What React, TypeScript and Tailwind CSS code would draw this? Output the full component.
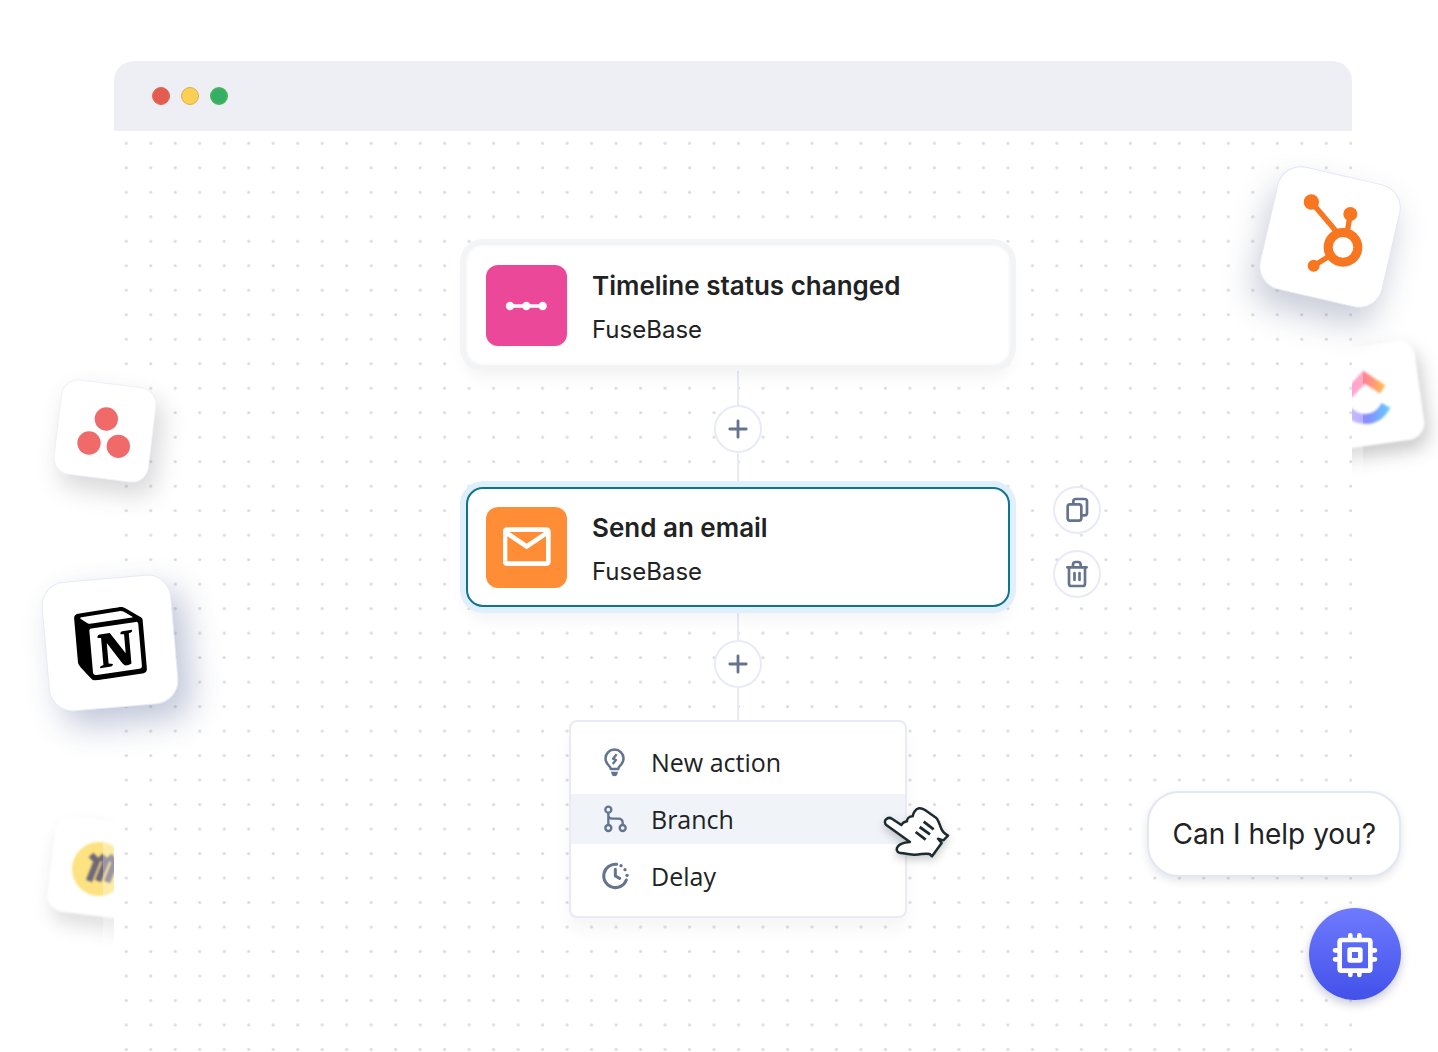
import type { ReactNode } from "react";
import { SiNotion } from "react-icons/si";

function DotGrid() {
  return (
    <svg className="pointer-events-none absolute inset-0 h-full w-full" aria-hidden="true">
      <defs>
        <pattern id="dots" width="24.49" height="24.49" patternUnits="userSpaceOnUse">
          <circle cx="12.3" cy="12.3" r="1.6" fill="#dcdcde" />
        </pattern>
      </defs>
      <rect width="100%" height="100%" fill="url(#dots)" />
    </svg>
  );
}

function Line({ className }: { className: string }) {
  return <div className={`w-[2px] bg-[#e8ebf6] ${className}`} />;
}

function RoundButton({ label, children }: { label: string; children: ReactNode }) {
  return (
    <button
      type="button"
      aria-label={label}
      className="flex size-12 items-center justify-center rounded-full border-2 border-[#e8ebf6] bg-white"
    >
      {children}
    </button>
  );
}

function AddButton() {
  return (
    <RoundButton label="Add step">
      <svg viewBox="0 0 20 20" className="size-5" stroke="#64748f" strokeWidth="2.8" strokeLinecap="round" aria-hidden="true">
        <path d="M10 1.8V18.2M1.8 10H18.2" />
      </svg>
    </RoundButton>
  );
}

function StepCard({
  title,
  color,
  ring,
  icon,
  children,
}: {
  title: string;
  color: string;
  ring: string;
  icon: ReactNode;
  children?: ReactNode;
}) {
  return (
    <div className={`relative z-10 flex h-[120px] w-[544px] items-center gap-[25px] rounded-[17px] border-2 bg-white pl-[18px] ${ring}`}>
      <div className={`flex size-[81px] shrink-0 items-center justify-center rounded-xl ${color}`}>{icon}</div>
      <div className="flex flex-col gap-3 pt-[5px]">
        <h2 className="text-[26px] leading-8 font-semibold">{title}</h2>
        <p className="text-[24px] leading-8">FuseBase</p>
      </div>
      {children}
    </div>
  );
}

function MenuItem({ label, icon, active = false }: { label: string; icon: ReactNode; active?: boolean }) {
  return (
    <button
      type="button"
      role="menuitem"
      className={`flex h-[50px] w-full items-center gap-[22px] pl-[30px] text-left font-['Open_Sans','Noto_Sans',sans-serif] text-[25px] leading-8 ${active ? "bg-[#f0f3f8]" : "bg-white"}`}
    >
      {icon}
      {label}
    </button>
  );
}

function AppTile({ place, shape, children }: { place: string; shape: string; children: ReactNode }) {
  return (
    <div className={`absolute flex items-center justify-center ${place}`}>
      <div className={`absolute inset-0 bg-white ${shape}`} />
      {children}
    </div>
  );
}

function BulbIcon() {
  return (
    <svg viewBox="123 144 84 84" className="size-7 shrink-0 overflow-visible" fill="none" stroke="#64748f" strokeWidth="7.5" aria-hidden="true">
      <path d="M152 207c0-5-4-9-8-13a27 27 0 1 1 39 0c-4 4-8 8-8 13z" strokeLinejoin="round" />
      <path d="M170 163l-11 13 9 4-10 12" strokeWidth="7" strokeLinejoin="round" />
      <path d="M153 215h21l-2 8c-1 4-4 6-8 6h-1c-4 0-7-2-8-6z" fill="#64748f" stroke="none" />
    </svg>
  );
}

function BranchIcon() {
  return (
    <svg viewBox="123 315 84 84" className="size-7 shrink-0 overflow-visible" fill="none" stroke="#64748f" strokeWidth="7" aria-hidden="true">
      <circle cx="145" cy="329" r="9" />
      <circle cx="145" cy="384" r="9" />
      <circle cx="188" cy="384" r="9" />
      <path d="M145 338v37M145 345c0 8 5 11 13 11h17c9 0 13 5 13 13v6" />
    </svg>
  );
}

function DelayIcon() {
  return (
    <svg viewBox="123 486 84 84" className="size-7 shrink-0 overflow-visible" fill="none" stroke="#64748f" strokeWidth="9" aria-hidden="true">
      <path d="M170 493A35 35 0 1 0 199 540" strokeLinecap="round" />
      <path d="M166 508v20l13 7" strokeLinecap="round" strokeLinejoin="round" />
      <g fill="#64748f" stroke="none">
        <circle cx="183" cy="497" r="5" />
        <circle cx="195" cy="509" r="5" />
        <circle cx="201" cy="526" r="5" />
      </g>
    </svg>
  );
}

function HandPointer() {
  return (
    <svg
      viewBox="66 42 216 168"
      className="pointer-events-none absolute top-[82px] left-[311px] h-14 w-[72px] overflow-visible drop-shadow-[0_4px_4px_rgba(0,0,0,0.2)]"
      aria-hidden="true"
    >
      <path
        d="M150 156L80 106C74 101 73 93 78 88C83 83 91 83 97 87L124 105L129 99C133 95 138 95 141 94C141 86 147 79 158 79C159 70 166 57 177 55C184 54 190 57 195 60L228 83C232 86 234 91 236 96L244 116C247 124 253 130 264 137L250 151L234 146L245 159L216 199L209 192C194 188 181 195 162 194C148 194 131 190 118 188C110 186 109 178 112 172C116 163 126 158 150 156Z"
        fill="#fff"
        stroke="#1c2b30"
        strokeWidth="7.5"
        strokeLinejoin="round"
      />
      <path d="M191 95L221 118M179 111L210 133M167 126L197 149" stroke="#1c2b30" strokeWidth="8.5" />
    </svg>
  );
}

export default function App() {
  return (
    <main className="relative flex min-h-screen flex-col overflow-hidden bg-white pt-[61px] pr-[86px] pl-[114px] font-['Inter',sans-serif] text-[#212223]">
      <AppTile
        place="top-[820px] left-[51px] size-24"
        shape="rotate-[7deg] rounded-[17px] shadow-[6px_12px_18px_rgba(60,60,70,0.16)] blur-[1px]"
      >
        <svg viewBox="0 0 96 96" className="relative size-24 blur-[1px]" aria-hidden="true">
          <circle cx="48" cy="49" r="27" fill="#fde281" />
          <path d="M40 35l6 6-8 20M49 36l6 5-8 20M58 36l6 6-8 20" fill="none" stroke="#6f6878" strokeWidth="6.5" />
        </svg>
      </AppTile>
      <AppTile
        place="top-[345px] right-[18px] size-[100px]"
        shape="rotate-[-8deg] rounded-[17px] shadow-[3px_10px_18px_rgba(60,60,70,0.28)] blur-[1px]"
      >
        <svg viewBox="60 75 300 300" className="relative size-[100px] blur-[1px]" fill="none" strokeWidth="30" aria-hidden="true">
          <defs>
            <linearGradient id="clickTop" gradientUnits="userSpaceOnUse" x1="150" y1="0" x2="255" y2="0">
              <stop offset="0" stopColor="#ff7ad2" />
              <stop offset="0.45" stopColor="#ff8590" />
              <stop offset="1" stopColor="#ffbf4d" />
            </linearGradient>
            <linearGradient id="clickBottom" gradientUnits="userSpaceOnUse" x1="140" y1="0" x2="265" y2="0">
              <stop offset="0" stopColor="#c09bff" />
              <stop offset="0.5" stopColor="#868cff" />
              <stop offset="1" stopColor="#67c8ff" />
            </linearGradient>
          </defs>
          <path d="M134 234L192 172L248 208" stroke="url(#clickTop)" />
          <path d="M136 266C168 306 228 312 258 256" stroke="url(#clickBottom)" />
        </svg>
      </AppTile>

      <section className="relative flex flex-1 flex-col rounded-t-[20px] bg-white shadow-[0_0_0_11px_rgba(255,255,255,0.3)]">
        <header className="flex h-[70px] items-center gap-[11px] rounded-t-[20px] bg-[#eeeff5] pl-[38px]">
          <span className="size-[18px] rounded-full border border-[#e9625a] bg-[#e25c50]" />
          <span className="size-[18px] rounded-full border border-[#e0ac50] bg-[#fccf55]" />
          <span className="size-[18px] rounded-full border-2 border-[#43b45a] bg-[#36ae65]" />
        </header>

        <div className="relative flex-1">
          <DotGrid />
          <div className="relative flex flex-col items-center pt-[114px] pb-32 pl-[10px]">
            <StepCard
              title="Timeline status changed"
              color="bg-[#ec4899]"
              ring="border-[#fbfbfc] shadow-[0_0_0_6px_#f3f4f5,0_12px_16px_rgba(0,0,0,0.05)]"
              icon={
                <svg viewBox="159 154 144 144" className="size-12" fill="#fff" aria-hidden="true">
                  <path d="M180 224h98v10h-98z" />
                  <circle cx="180" cy="229" r="12.5" />
                  <circle cx="229" cy="229" r="12.5" />
                  <circle cx="278" cy="229" r="12.5" />
                </svg>
              }
            />
            <Line className="h-10" />
            <AddButton />
            <Line className="h-[34px]" />
            <StepCard
              title="Send an email"
              color="bg-[#ff8d36]"
              ring="border-[#0f7490] shadow-[0_0_0_6px_#dfeffc,0_12px_16px_rgba(0,0,0,0.05)]"
              icon={
                <svg viewBox="158 159 144 144" className="size-12" fill="none" stroke="#fff" strokeWidth="14" aria-hidden="true">
                  <rect x="164" y="179" width="130" height="102" rx="6" />
                  <path d="M166 187L229 229L292 187" />
                </svg>
              }
            >
              <div className="absolute top-[-3px] left-full ml-[45px] flex flex-col gap-4">
                <RoundButton label="Duplicate step">
                  <svg viewBox="188 79 84 84" className="size-7" fill="none" stroke="#64748f" strokeWidth="8" aria-hidden="true">
                    <rect x="202" y="104" width="41" height="49" rx="7" />
                    <path d="M219 104v-9a7 7 0 0 1 7-7h27a7 7 0 0 1 7 7v35a7 7 0 0 1-7 7h-9" />
                  </svg>
                </RoundButton>
                <RoundButton label="Delete step">
                  <svg viewBox="189 270 84 84" className="size-7" fill="none" stroke="#64748f" strokeWidth="8" strokeLinecap="round" aria-hidden="true">
                    <path d="M202 292h58M207 292v49a7 7 0 0 0 7 7h34a7 7 0 0 0 7-7v-49M219 291v-7a8 8 0 0 1 8-8h7a8 8 0 0 1 8 8v7M223.5 309v21M238.5 309v21" />
                  </svg>
                </RoundButton>
              </div>
            </StepCard>
            <Line className="h-[33px]" />
            <AddButton />
            <Line className="h-8" />
            <div
              role="menu"
              className="relative flex w-[338px] flex-col gap-[7px] rounded-lg border-2 border-[#e8ebf6] bg-white py-[15px] shadow-[0_12px_16px_rgba(0,0,0,0.04)]"
            >
              <MenuItem label="New action" icon={<BulbIcon />} />
              <MenuItem label="Branch" icon={<BranchIcon />} active />
              <MenuItem label="Delay" icon={<DelayIcon />} />
              <HandPointer />
            </div>
          </div>
        </div>
      </section>

      <AppTile
        place="top-[383px] left-[57px] size-24"
        shape="rotate-[7deg] rounded-[17px] border border-[#eff0f8] shadow-[8px_12px_24px_rgba(60,60,70,0.2)]"
      >
        <svg viewBox="82 69 288 288" className="relative size-24" fill="#f06a6a" aria-hidden="true">
          <circle cx="230" cy="177" r="35" />
          <circle cx="178" cy="249" r="35" />
          <circle cx="266" cy="259" r="35" />
        </svg>
      </AppTile>
      <AppTile
        place="top-[578px] left-[45px] size-[130px]"
        shape="rotate-[-5deg] rounded-3xl border border-[#e6e9f7] shadow-[12px_16px_32px_rgba(50,70,130,0.3)]"
      >
        <SiNotion className="relative size-[71px] rotate-[-5deg] text-black" aria-hidden="true" />
      </AppTile>
      <AppTile
        place="top-[174px] right-[45px] size-[126px]"
        shape="rotate-[13deg] rounded-3xl border border-[#e3e6f5] shadow-[-2px_18px_32px_rgba(50,60,110,0.26)]"
      >
        <svg viewBox="112 101 378 378" className="relative size-[126px]" fill="#f8761f" stroke="#f8761f" aria-hidden="true">
          <circle cx="340" cy="321" r="44.5" fill="none" strokeWidth="27" />
          <path d="M245 185L322 276M362 221L353 272M252 376L300 347" strokeWidth="16" />
          <circle cx="245" cy="185" r="23" stroke="none" />
          <circle cx="362" cy="221" r="21" stroke="none" />
          <circle cx="252" cy="376" r="18" stroke="none" />
        </svg>
      </AppTile>

      <aside className="absolute right-[37px] bottom-[52px] flex flex-col items-end gap-[31px]">
        <p className="rounded-[32px] border-2 border-[#e3e7f2] bg-white px-[23px] py-[25px] text-[28px] leading-8 shadow-[0_4px_8px_rgba(30,40,80,0.12)]">
          Can I help you?
        </p>
        <button
          type="button"
          aria-label="Open assistant"
          className="flex size-[92px] items-center justify-center rounded-full bg-linear-to-b from-[#6f7afd] to-[#4350ea] shadow-[0_4px_10px_rgba(30,40,100,0.25)]"
        >
          <svg viewBox="605 483 138 138" className="size-[46px] overflow-visible" fill="none" stroke="#fff" strokeWidth="14" strokeLinecap="round" aria-hidden="true">
            <rect x="628" y="510" width="92" height="92" rx="5" />
            <rect x="658" y="539" width="32" height="32" rx="1" />
            <path d="M660 496v10M687 496v10M660 605v10M687 605v10M614 541h10M614 568h10M724 541h10M724 568h10" />
          </svg>
        </button>
      </aside>
    </main>
  );
}
